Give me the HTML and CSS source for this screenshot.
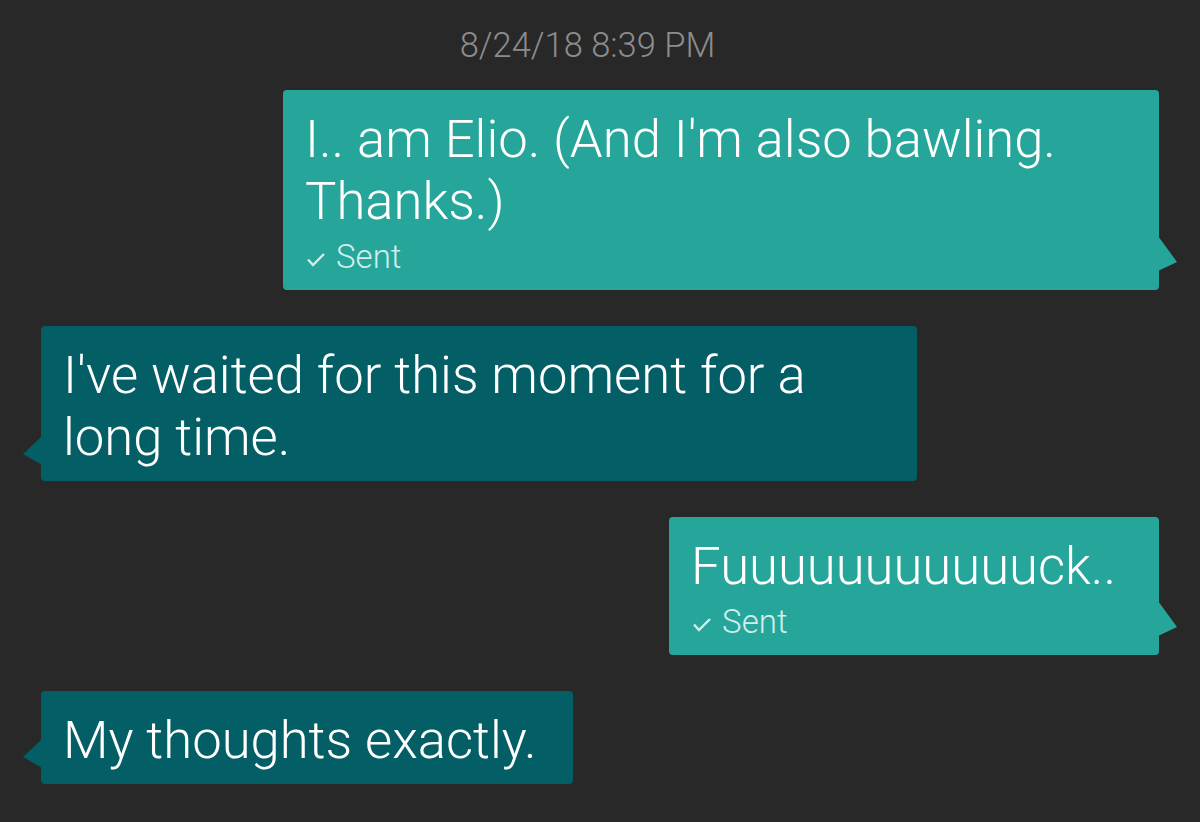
FILE: index.html
```html
<!DOCTYPE html>
<html lang="en">
<head>
    <meta charset="UTF-8">
    <meta name="viewport" content="width=device-width, initial-scale=1.0">
    <title>Messages</title>
    <link rel="stylesheet" href="styles.css">
</head>
<body>
    <div class="thread">
        <div class="stamp">8/24/18 8:39 PM</div>

        <div class="msg msg-out">
            <p class="text">I.. am Elio. (And I'm also bawling. Thanks.)</p>
            <div class="status">
                <svg class="tick" width="18" height="14" viewBox="0 0 18 14"><path d="M1 6.5 L6 12 L17 1"/></svg>
                Sent
            </div>
        </div>

        <div class="msg msg-in">
            <p class="text">I've waited for this moment for a long time.</p>
        </div>

        <div class="msg msg-out">
            <p class="text">Fuuuuuuuuuuuck..</p>
            <div class="status">
                <svg class="tick" width="18" height="14" viewBox="0 0 18 14"><path d="M1 6.5 L6 12 L17 1"/></svg>
                Sent
            </div>
        </div>

        <div class="msg msg-in">
            <p class="text">My thoughts exactly.</p>
        </div>
    </div>
</body>
</html>
```

FILE: styles.css
```css
body {
    margin: 0;
    background: #282828;
    font-family: Roboto, "Liberation Sans", sans-serif;
    font-weight: 300;
    color: #fff;
}
.thread {
    display: flex;
    flex-direction: column;
    padding: 0 41px;
}
.stamp {
    padding-top: 25px;
    font-size: 34.5px;
    line-height: 40px;
    color: #8c8c8c;
    text-align: center;
    padding-right: 25px;
}
.msg {
    position: relative;
    max-width: 876px;
    box-sizing: border-box;
    margin-top: 36px;
    padding: 18px 38px 13px 22px;
    border-radius: 4px;
}
.stamp + .msg {
    margin-top: 25px;
}
.text {
    margin: 0;
    font-size: 52.6px;
    line-height: 62px;
}
.msg-out {
    align-self: flex-end;
    padding-right: 43px;
    background: #26a69a;
}
.msg-in {
    align-self: flex-start;
    padding-right: 36px;
    background: #035e66;
}
/* little speech tails on the outer edge */
.msg::after {
    content: "";
    position: absolute;
    width: 19px;
}
.msg-out::after {
    right: -18px;
    bottom: 19px;
    height: 35px;
    background: #26a69a;
    clip-path: polygon(0 0, 100% 74%, 0 100%);
}
.msg-in::after {
    left: -18px;
    bottom: 16px;
    height: 29px;
    background: #035e66;
    clip-path: polygon(100% 0, 0 62%, 100% 100%);
}
.status {
    display: flex;
    align-items: center;
    gap: 11px;
    margin-top: 6px;
    padding-bottom: 1px;
    font-size: 33px;
    line-height: 38px;
    color: #d2eeea;
}
.tick {
    flex: none;
    margin-left: 2px;
    margin-top: 6px;
    fill: none;
    stroke: #d2eeea;
    stroke-width: 2.4;
}
```
